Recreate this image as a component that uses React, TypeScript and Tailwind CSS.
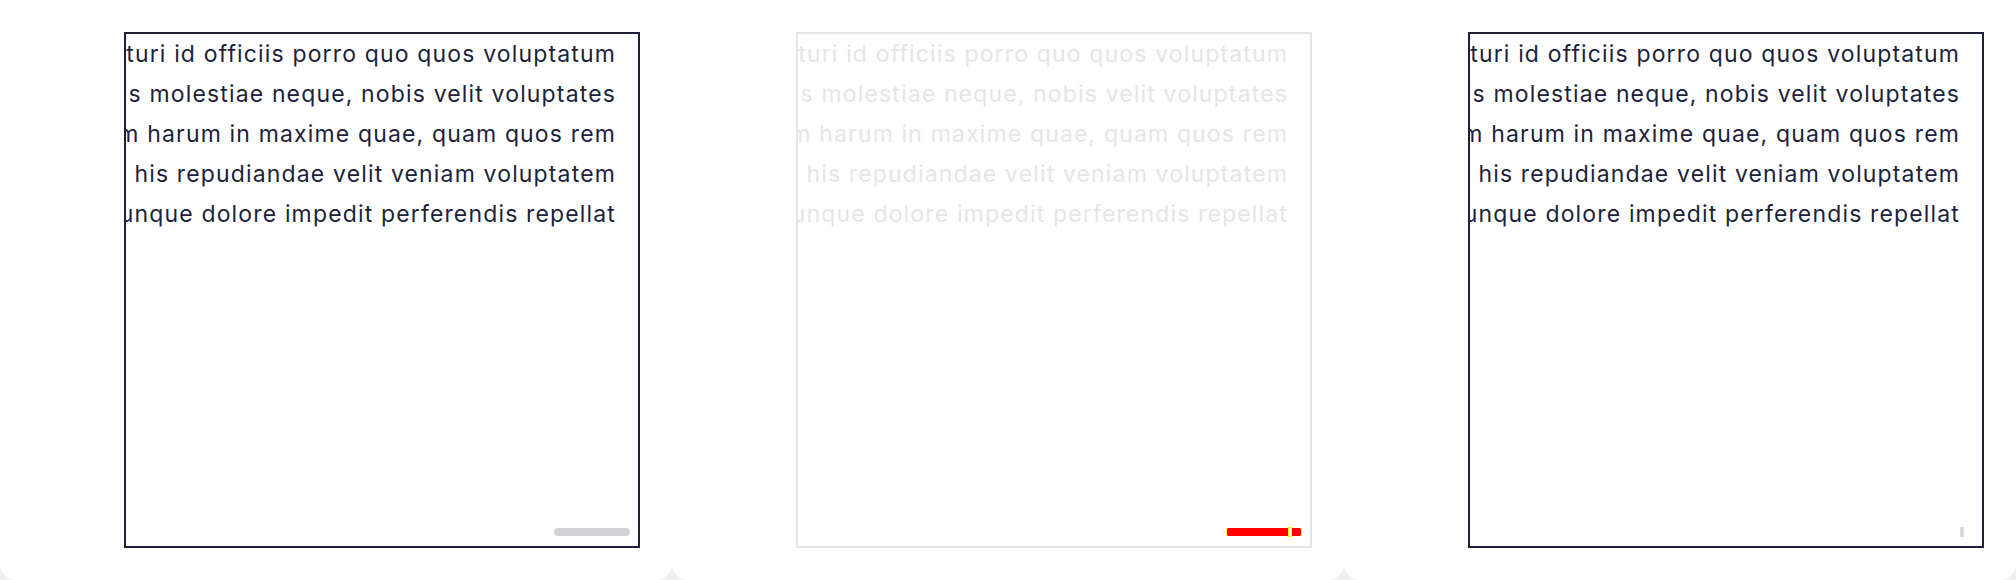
import React from 'react';

const lines = [
  'Lorem ipsum dolor sit amet consectetur adipisicing elit. Quibusdam, consequaturi id officiis porro quo quos voluptatum',
  'Dolorum cupiditate aspernatur eaque eum, omnis molestiae neque, nobis velit voluptates',
  'Ratione earum quisquam, autem nam harum in maxime quae, quam quos rem',
  'Totam sit accusantium quibusdam, aut his repudiandae velit veniam voluptatem',
  'Quisquam nemo, eaque nesciunt, dignissimos quicunque dolore impedit perferendis repellat',
];

type Variant = 'default' | 'muted' | 'tiny';

const Thumb: React.FC<{ variant: Variant }> = ({ variant }) => {
  if (variant === 'muted') {
    return (
      <div className="flex h-[10px] justify-end pr-[8px] pb-[9px] box-content">
        <div className="my-px flex h-[8px] w-[76px] items-start justify-end rounded-[2px] border-x border-[#ffff00] bg-[#ff0000] pr-[9px]">
          <div className="-mt-px h-[10px] w-[4px] border border-[#ffff00] bg-white" />
        </div>
      </div>
    );
  }
  if (variant === 'tiny') {
    return (
      <div className="flex h-[10px] justify-end pr-[18px] pb-[9px] box-content">
        <div className="h-[10px] w-[4px] bg-gradient-to-r from-[#e4e4e7] via-[#cfcfd4] to-[#e4e4e7]" />
      </div>
    );
  }
  return (
    <div className="flex h-[10px] justify-end pr-[8px] pb-[9px] box-content">
      <div className="my-px h-[8px] w-[76px] rounded-full bg-[#d2d2d7]" />
    </div>
  );
};

const ScrollBox: React.FC<{ variant: Variant }> = ({ variant }) => {
  const muted = variant === 'muted';
  return (
    <div
      className={`flex h-[516px] w-[516px] flex-col overflow-hidden border-2 bg-white ${
        muted ? 'border-[#e6e6e6] text-[#e6e6e6]' : 'border-[#1e1f3b] text-[#1e1f3b]'
      }`}
    >
      <div className="flex flex-1 flex-col items-end pr-[22px] font-['Inter',sans-serif] text-[23px] leading-[40px] tracking-[1.15px] whitespace-nowrap">
        {lines.map((l, i) => (
          <p key={i}>{l}</p>
        ))}
      </div>
      <Thumb variant={variant} />
    </div>
  );
};

export default function App() {
  const variants: Variant[] = ['default', 'muted', 'tiny'];
  return (
    <div className="flex h-[580px] w-[2016px] overflow-hidden bg-[#efefef]">
      {variants.map((v) => (
        <div key={v} className="h-[580px] w-[672px] shrink-0 rounded-b-[16px] bg-white pl-[124px] pt-[32px]">
          <ScrollBox variant={v} />
        </div>
      ))}
    </div>
  );
}
